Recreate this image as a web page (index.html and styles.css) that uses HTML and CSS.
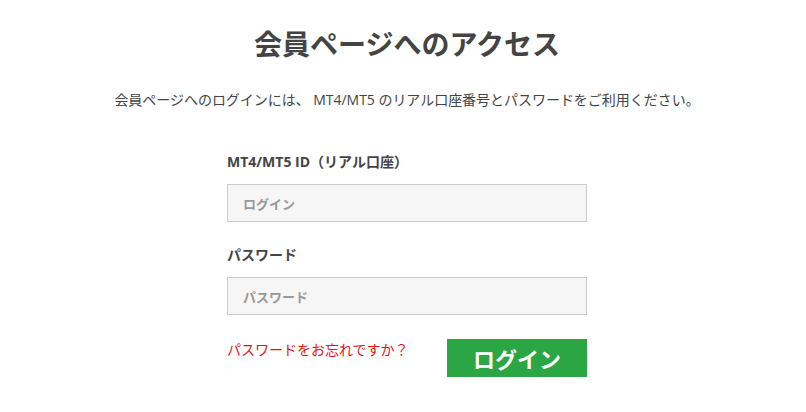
FILE: index.html
```html
<!DOCTYPE html>
<html lang="ja">
<head>
<meta charset="utf-8">
<link rel="stylesheet" href="styles.css">
</head>
<body>
<main class="page">
  <h1 class="title">会員ページへのアクセス</h1>
  <p class="lead">会員ページへのログインには、 MT4/MT5 のリアル口座番号とパスワードをご利用ください。</p>
  <form class="form">
    <label class="label">MT4/MT5 ID（リアル口座）</label>
    <div class="input"><span class="ph">ログイン</span></div>
    <label class="label label-pw">パスワード</label>
    <div class="input"><span class="ph">パスワード</span></div>
    <div class="actions">
      <a class="forgot">パスワードをお忘れですか？</a>
      <button type="button" class="btn">ログイン</button>
    </div>
  </form>
</main>
</body>
</html>
```

FILE: styles.css
```css
html, body {
  margin: 0;
  padding: 0;
  background: #fff;
}
body {
  font-family: "Open Sans", "Noto Sans CJK JP", sans-serif;
  color: #444;
}
.page {
  display: flex;
  flex-direction: column;
  align-items: center;
  width: 806px;
}
.title {
  margin: 23px 0 0 8px;
  font-size: 28px;
  line-height: 40px;
  font-weight: 700;
  color: #444;
  font-family: "Noto Sans CJK JP", sans-serif;
}
.lead {
  margin: 27px 0 0 8px;
  font-size: 14px;
  line-height: 20px;
  letter-spacing: -0.03px;
  color: #444;
}
.form {
  display: flex;
  flex-direction: column;
  width: 360px;
  margin: 42px 0 0 8px;
}
.label {
  font-size: 14px;
  line-height: 20px;
  font-weight: 700;
  color: #444;
}
.label-pw {
  margin-top: 23px;
}
.input {
  margin-top: 12px;
  height: 36px;
  border: 1px solid #ccc;
  background: #f6f6f6;
  display: flex;
  align-items: center;
  padding-left: 15px;
}
.ph {
  font-size: 13px;
  font-weight: 700;
  color: #999;
  font-family: "Noto Sans CJK JP", sans-serif;
}
.actions {
  display: flex;
  justify-content: space-between;
  align-items: flex-start;
  margin-top: 24px;
}
.forgot {
  font-size: 14px;
  line-height: 20px;
  color: #e0141e;
  margin-top: 1px;
}
.btn {
  width: 140px;
  height: 38px;
  border: 0;
  background: #2aa645;
  color: #fff;
  font-family: "Noto Sans CJK JP", sans-serif;
  font-size: 22px;
  font-weight: 700;
  padding: 0;
  line-height: 38px;
}
```
